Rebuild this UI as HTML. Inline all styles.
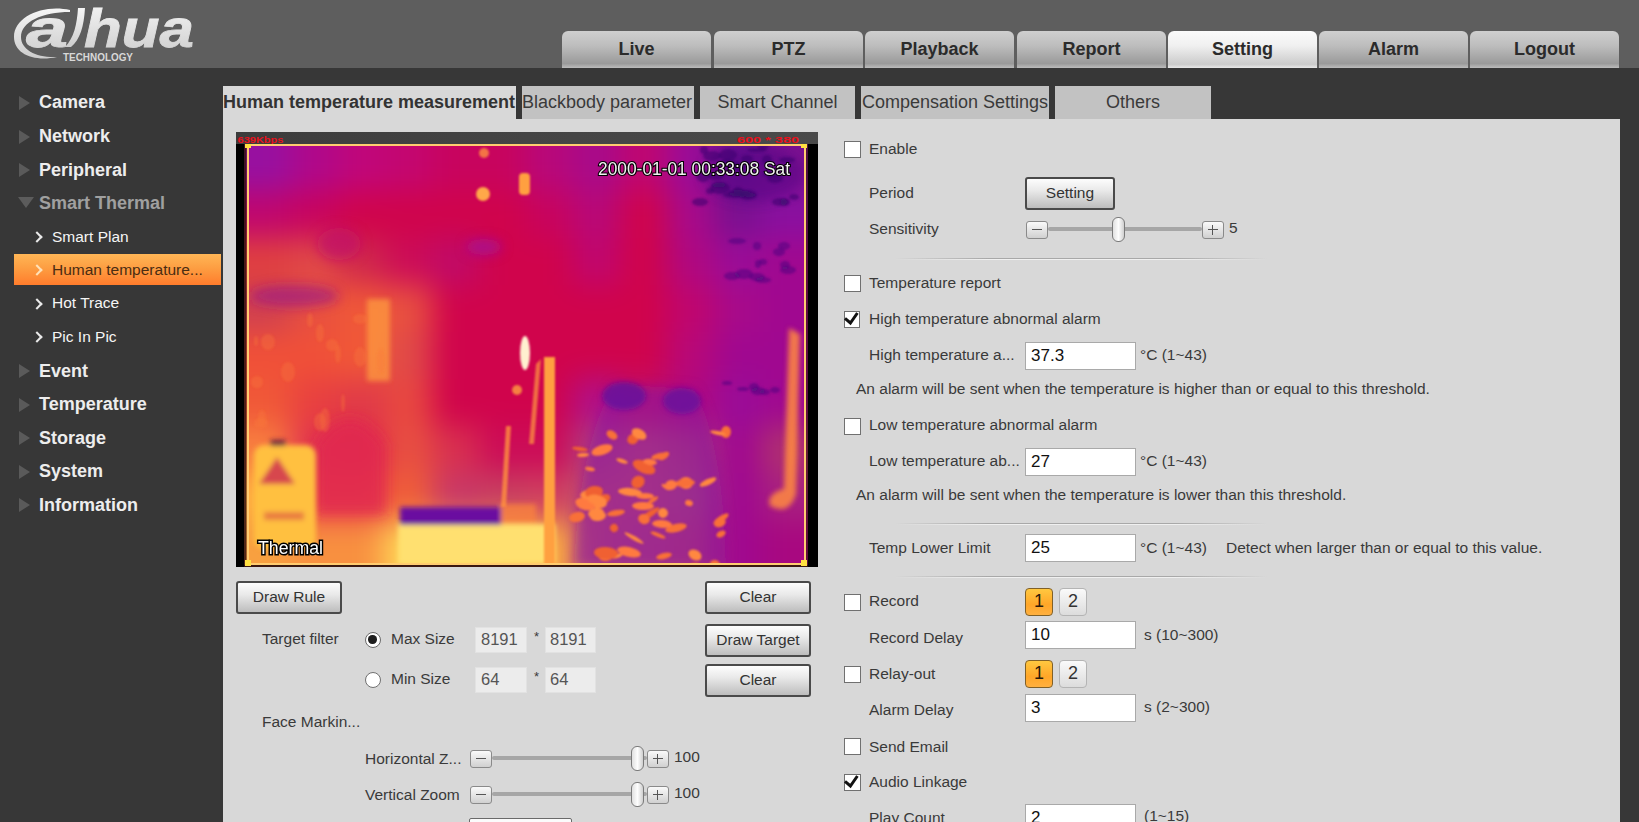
<!DOCTYPE html>
<html><head><meta charset="utf-8">
<style>
*{box-sizing:border-box;margin:0;padding:0}
html,body{width:1639px;height:822px;overflow:hidden;background:#373737;font-family:"Liberation Sans",sans-serif;position:relative}
.a{position:absolute;white-space:nowrap}
#hdr{position:absolute;left:0;top:0;width:1639px;height:68px;background:#5e5e5e}
.nt{position:absolute;top:31px;width:149px;height:37px;border-radius:6px 6px 0 0;background:linear-gradient(#cfcfcf 0%,#bdbdbd 40%,#9a9a9a 88%,#bcbcbc 100%);font-weight:bold;font-size:18px;color:#2b2b2b;text-align:center;line-height:37px}
.nt.on{background:linear-gradient(#fbfbfb 0%,#f0f0f0 40%,#cbcbcb 90%,#e8e8e8 100%)}
#side{position:absolute;left:0;top:68px;width:223px;height:754px;background:#373737}
.m{position:absolute;left:39px;font-size:18px;font-weight:bold;color:#ededed;line-height:20px}
.tri{position:absolute;left:19px;margin-top:1px;width:0;height:0;border-top:7px solid transparent;border-bottom:7px solid transparent;border-left:11px solid #5a5a5a}
.sm{position:absolute;left:52px;font-size:15.5px;color:#f5f5f5;line-height:18px;margin-top:1px}
.chev{position:absolute;left:33px;width:8px;height:8px;border-right:2.4px solid #eaeaea;border-top:2.4px solid #eaeaea;transform:rotate(45deg);margin-top:1px}
.tab{position:absolute;top:86px;height:33px;background:#c2c2c2;font-size:18px;color:#3a3a3a;line-height:33px;text-align:center;white-space:nowrap}
#panel{position:absolute;left:223px;top:119px;width:1397px;height:703px;background:#d8d8d8}
.t{position:absolute;font-size:15.5px;color:#3a3a3a;white-space:nowrap;line-height:18px;margin-top:-1px}
.cb{position:absolute;width:16.5px;height:16.5px;border:1.6px solid #707070;background:#fff}
.inp{position:absolute;width:111px;height:28px;border:1px solid #a9a9a9;background:#fff;font-size:17px;color:#111;padding-left:5px;line-height:25px}
.btn{position:absolute;border:2px solid #4a4a4a;border-radius:3px;background:linear-gradient(#fdfdfd,#e9e9e9 40%,#bdbdbd);font-size:15.5px;color:#333;text-align:center}
.sep{position:absolute;height:1px;background:linear-gradient(90deg,rgba(160,160,160,0),#a8a8a8 25%,#a8a8a8 75%,rgba(160,160,160,0))}.sep:after{content:"";position:absolute;left:0;top:1px;width:100%;height:1px;background:linear-gradient(90deg,rgba(250,250,250,0),#f0f0f0 25%,#f0f0f0 75%,rgba(250,250,250,0))}
</style></head><body>
<div id="hdr">
<svg class="a" style="left:0;top:0" width="220" height="68" viewBox="0 0 220 68">
<defs><linearGradient id="lg" x1="0" y1="0" x2="0" y2="1"><stop offset="0" stop-color="#f6f6f6"/><stop offset="1" stop-color="#cdcdcd"/></linearGradient></defs>
<path d="M70 10 C44 4 14 16 14 37 C14 54 34 62 57 57 C37 58 21 50 21 37 C21 22 42 12 70 12 Z" fill="url(#lg)"/>
<text x="26" y="47" font-family="Liberation Sans" font-weight="bold" font-style="italic" font-size="53" fill="url(#lg)" stroke="url(#lg)" stroke-width="0.8" textLength="42" lengthAdjust="spacingAndGlyphs">a</text>
<path d="M78 8 L85 8 C84 26 80 40 71 47 L65 47 C74 38 77 24 78 8 Z" fill="url(#lg)"/>
<text x="84" y="47" font-family="Liberation Sans" font-weight="bold" font-style="italic" font-size="53" fill="url(#lg)" stroke="url(#lg)" stroke-width="0.8" textLength="110" lengthAdjust="spacingAndGlyphs">hua</text>
<text x="63" y="61" font-family="Liberation Sans" font-weight="bold" font-size="10.5" fill="#d8d8d8" textLength="70" lengthAdjust="spacingAndGlyphs">TECHNOLOGY</text>
</svg>
<div class="nt" style="left:562px">Live</div>
<div class="nt" style="left:714px">PTZ</div>
<div class="nt" style="left:865px">Playback</div>
<div class="nt" style="left:1017px">Report</div>
<div class="nt on" style="left:1168px">Setting</div>
<div class="nt" style="left:1319px">Alarm</div>
<div class="nt" style="left:1470px">Logout</div>
</div>
<div id="side">
<div class="tri" style="top:26.5px"></div><div class="m" style="top:23.9px">Camera</div>
<div class="tri" style="top:60.5px"></div><div class="m" style="top:58px">Network</div>
<div class="tri" style="top:94px"></div><div class="m" style="top:91.7px">Peripheral</div>
<div class="tri2" style="position:absolute;left:18px;top:129px;width:0;height:0;border-left:8px solid transparent;border-right:8px solid transparent;border-top:11px solid #5c5c5c"></div><div class="m" style="top:124.5px;color:#a0a0a0">Smart Thermal</div>
<div class="chev" style="top:164px"></div><div class="sm" style="top:159px">Smart Plan</div>
<div style="position:absolute;left:14px;top:186px;width:207px;height:31px;background:linear-gradient(#ffb656,#fd9e42 45%,#ff7c2c)"></div>
<div class="chev" style="top:197px;border-color:#ffe2b8"></div><div class="sm" style="top:192px;color:#4a2c12">Human temperature...</div>
<div class="chev" style="top:230.5px"></div><div class="sm" style="top:225.4px">Hot Trace</div>
<div class="chev" style="top:264.3px"></div><div class="sm" style="top:259.2px">Pic In Pic</div>
<div class="tri" style="top:295px"></div><div class="m" style="top:292.5px">Event</div>
<div class="tri" style="top:328.5px"></div><div class="m" style="top:326.2px">Temperature</div>
<div class="tri" style="top:362px"></div><div class="m" style="top:359.8px">Storage</div>
<div class="tri" style="top:395.5px"></div><div class="m" style="top:393.4px">System</div>
<div class="tri" style="top:429px"></div><div class="m" style="top:427px">Information</div>
</div>
<div class="tab" style="left:223px;width:293px;background:#d8d8d8;font-weight:bold;color:#333;text-align:left">Human temperature measurement</div>
<div class="tab" style="left:522px;width:172px;text-align:left">Blackbody parameter</div>
<div class="tab" style="left:700px;width:155px">Smart Channel</div>
<div class="tab" style="left:861px;width:188px;text-align:left;padding-left:1px">Compensation Settings</div>
<div class="tab" style="left:1055px;width:156px">Others</div>
<div id="panel"></div>
<div class="a" style="left:236px;top:132px;width:582px;height:435px;background:#000"></div>
<div class="a" style="left:236px;top:132px;width:582px;height:12px;background:linear-gradient(90deg,#3c3c3c,#444 50%,#4a4a4a)"></div>
<svg class="a" style="left:236px;top:132px" width="582" height="12"><text x="1.5" y="10.5" font-family="Liberation Sans" font-weight="bold" font-size="9" fill="#e8101c" textLength="46" lengthAdjust="spacingAndGlyphs">639Kbps</text><text x="501" y="10.5" font-family="Liberation Sans" font-weight="bold" font-size="9" fill="#e8101c" textLength="62" lengthAdjust="spacingAndGlyphs">600 * 380</text></svg>

<div class="a" style="left:244px;top:144px;width:564px;height:423px;overflow:hidden"><div style="position:absolute;left:-47px;top:-47px;width:658px;height:517px;filter:blur(15px)"><div style="position:absolute;left:0px;top:0px;width:48px;height:48px;background:#9810a0"></div><div style="position:absolute;left:47px;top:0px;width:48px;height:48px;background:#9810a0"></div><div style="position:absolute;left:94px;top:0px;width:48px;height:48px;background:#b0088a"></div><div style="position:absolute;left:141px;top:0px;width:48px;height:48px;background:#c0067a"></div><div style="position:absolute;left:188px;top:0px;width:48px;height:48px;background:#c40670"></div><div style="position:absolute;left:235px;top:0px;width:48px;height:48px;background:#c8045e"></div><div style="position:absolute;left:282px;top:0px;width:48px;height:48px;background:#c8045e"></div><div style="position:absolute;left:329px;top:0px;width:48px;height:48px;background:#b8087a"></div><div style="position:absolute;left:376px;top:0px;width:48px;height:48px;background:#a80a8a"></div><div style="position:absolute;left:423px;top:0px;width:48px;height:48px;background:#c00670"></div><div style="position:absolute;left:470px;top:0px;width:48px;height:48px;background:#9a0c98"></div><div style="position:absolute;left:517px;top:0px;width:48px;height:48px;background:#6a1090"></div><div style="position:absolute;left:564px;top:0px;width:48px;height:48px;background:#7a1090"></div><div style="position:absolute;left:611px;top:0px;width:48px;height:48px;background:#7a1090"></div><div style="position:absolute;left:0px;top:47px;width:48px;height:48px;background:#9810a0"></div><div style="position:absolute;left:47px;top:47px;width:48px;height:48px;background:#9810a0"></div><div style="position:absolute;left:94px;top:47px;width:48px;height:48px;background:#b0088a"></div><div style="position:absolute;left:141px;top:47px;width:48px;height:48px;background:#c0067a"></div><div style="position:absolute;left:188px;top:47px;width:48px;height:48px;background:#c40670"></div><div style="position:absolute;left:235px;top:47px;width:48px;height:48px;background:#c8045e"></div><div style="position:absolute;left:282px;top:47px;width:48px;height:48px;background:#c8045e"></div><div style="position:absolute;left:329px;top:47px;width:48px;height:48px;background:#b8087a"></div><div style="position:absolute;left:376px;top:47px;width:48px;height:48px;background:#a80a8a"></div><div style="position:absolute;left:423px;top:47px;width:48px;height:48px;background:#c00670"></div><div style="position:absolute;left:470px;top:47px;width:48px;height:48px;background:#9a0c98"></div><div style="position:absolute;left:517px;top:47px;width:48px;height:48px;background:#6a1090"></div><div style="position:absolute;left:564px;top:47px;width:48px;height:48px;background:#7a1090"></div><div style="position:absolute;left:611px;top:47px;width:48px;height:48px;background:#7a1090"></div><div style="position:absolute;left:0px;top:94px;width:48px;height:48px;background:#c0066e"></div><div style="position:absolute;left:47px;top:94px;width:48px;height:48px;background:#c0066e"></div><div style="position:absolute;left:94px;top:94px;width:48px;height:48px;background:#c8045e"></div><div style="position:absolute;left:141px;top:94px;width:48px;height:48px;background:#d0044c"></div><div style="position:absolute;left:188px;top:94px;width:48px;height:48px;background:#d0044c"></div><div style="position:absolute;left:235px;top:94px;width:48px;height:48px;background:#d0044c"></div><div style="position:absolute;left:282px;top:94px;width:48px;height:48px;background:#d0044c"></div><div style="position:absolute;left:329px;top:94px;width:48px;height:48px;background:#c8045e"></div><div style="position:absolute;left:376px;top:94px;width:48px;height:48px;background:#b80878"></div><div style="position:absolute;left:423px;top:94px;width:48px;height:48px;background:#d0044c"></div><div style="position:absolute;left:470px;top:94px;width:48px;height:48px;background:#a80a8a"></div><div style="position:absolute;left:517px;top:94px;width:48px;height:48px;background:#7a1090"></div><div style="position:absolute;left:564px;top:94px;width:48px;height:48px;background:#8a10a0"></div><div style="position:absolute;left:611px;top:94px;width:48px;height:48px;background:#8a10a0"></div><div style="position:absolute;left:0px;top:141px;width:48px;height:48px;background:#e04040"></div><div style="position:absolute;left:47px;top:141px;width:48px;height:48px;background:#e04040"></div><div style="position:absolute;left:94px;top:141px;width:48px;height:48px;background:#e04848"></div><div style="position:absolute;left:141px;top:141px;width:48px;height:48px;background:#d0284c"></div><div style="position:absolute;left:188px;top:141px;width:48px;height:48px;background:#cc0c58"></div><div style="position:absolute;left:235px;top:141px;width:48px;height:48px;background:#c00a68"></div><div style="position:absolute;left:282px;top:141px;width:48px;height:48px;background:#d0044c"></div><div style="position:absolute;left:329px;top:141px;width:48px;height:48px;background:#d0044c"></div><div style="position:absolute;left:376px;top:141px;width:48px;height:48px;background:#c0066e"></div><div style="position:absolute;left:423px;top:141px;width:48px;height:48px;background:#d0044c"></div><div style="position:absolute;left:470px;top:141px;width:48px;height:48px;background:#b00880"></div><div style="position:absolute;left:517px;top:141px;width:48px;height:48px;background:#9a0c98"></div><div style="position:absolute;left:564px;top:141px;width:48px;height:48px;background:#a00890"></div><div style="position:absolute;left:611px;top:141px;width:48px;height:48px;background:#a00890"></div><div style="position:absolute;left:0px;top:188px;width:48px;height:48px;background:#d04050"></div><div style="position:absolute;left:47px;top:188px;width:48px;height:48px;background:#d04050"></div><div style="position:absolute;left:94px;top:188px;width:48px;height:48px;background:#e85040"></div><div style="position:absolute;left:141px;top:188px;width:48px;height:48px;background:#f05838"></div><div style="position:absolute;left:188px;top:188px;width:48px;height:48px;background:#e85040"></div><div style="position:absolute;left:235px;top:188px;width:48px;height:48px;background:#d0044c"></div><div style="position:absolute;left:282px;top:188px;width:48px;height:48px;background:#d0044c"></div><div style="position:absolute;left:329px;top:188px;width:48px;height:48px;background:#d0044c"></div><div style="position:absolute;left:376px;top:188px;width:48px;height:48px;background:#d0044c"></div><div style="position:absolute;left:423px;top:188px;width:48px;height:48px;background:#d0044c"></div><div style="position:absolute;left:470px;top:188px;width:48px;height:48px;background:#c0066e"></div><div style="position:absolute;left:517px;top:188px;width:48px;height:48px;background:#a80a8a"></div><div style="position:absolute;left:564px;top:188px;width:48px;height:48px;background:#a00890"></div><div style="position:absolute;left:611px;top:188px;width:48px;height:48px;background:#a00890"></div><div style="position:absolute;left:0px;top:235px;width:48px;height:48px;background:#f05038"></div><div style="position:absolute;left:47px;top:235px;width:48px;height:48px;background:#f05038"></div><div style="position:absolute;left:94px;top:235px;width:48px;height:48px;background:#f05038"></div><div style="position:absolute;left:141px;top:235px;width:48px;height:48px;background:#f05838"></div><div style="position:absolute;left:188px;top:235px;width:48px;height:48px;background:#e04a48"></div><div style="position:absolute;left:235px;top:235px;width:48px;height:48px;background:#d0044c"></div><div style="position:absolute;left:282px;top:235px;width:48px;height:48px;background:#d0044c"></div><div style="position:absolute;left:329px;top:235px;width:48px;height:48px;background:#d0044c"></div><div style="position:absolute;left:376px;top:235px;width:48px;height:48px;background:#d0044c"></div><div style="position:absolute;left:423px;top:235px;width:48px;height:48px;background:#d0044c"></div><div style="position:absolute;left:470px;top:235px;width:48px;height:48px;background:#b80878"></div><div style="position:absolute;left:517px;top:235px;width:48px;height:48px;background:#a00890"></div><div style="position:absolute;left:564px;top:235px;width:48px;height:48px;background:#a00890"></div><div style="position:absolute;left:611px;top:235px;width:48px;height:48px;background:#a00890"></div><div style="position:absolute;left:0px;top:282px;width:48px;height:48px;background:#f05838"></div><div style="position:absolute;left:47px;top:282px;width:48px;height:48px;background:#f05838"></div><div style="position:absolute;left:94px;top:282px;width:48px;height:48px;background:#e84040"></div><div style="position:absolute;left:141px;top:282px;width:48px;height:48px;background:#e03a48"></div><div style="position:absolute;left:188px;top:282px;width:48px;height:48px;background:#e84840"></div><div style="position:absolute;left:235px;top:282px;width:48px;height:48px;background:#d0044c"></div><div style="position:absolute;left:282px;top:282px;width:48px;height:48px;background:#d0044c"></div><div style="position:absolute;left:329px;top:282px;width:48px;height:48px;background:#d0044c"></div><div style="position:absolute;left:376px;top:282px;width:48px;height:48px;background:#b0108a"></div><div style="position:absolute;left:423px;top:282px;width:48px;height:48px;background:#c0106a"></div><div style="position:absolute;left:470px;top:282px;width:48px;height:48px;background:#b00880"></div><div style="position:absolute;left:517px;top:282px;width:48px;height:48px;background:#9a0c98"></div><div style="position:absolute;left:564px;top:282px;width:48px;height:48px;background:#a00890"></div><div style="position:absolute;left:611px;top:282px;width:48px;height:48px;background:#a00890"></div><div style="position:absolute;left:0px;top:329px;width:48px;height:48px;background:#f88040"></div><div style="position:absolute;left:47px;top:329px;width:48px;height:48px;background:#f88040"></div><div style="position:absolute;left:94px;top:329px;width:48px;height:48px;background:#e03050"></div><div style="position:absolute;left:141px;top:329px;width:48px;height:48px;background:#e02850"></div><div style="position:absolute;left:188px;top:329px;width:48px;height:48px;background:#e85040"></div><div style="position:absolute;left:235px;top:329px;width:48px;height:48px;background:#d83050"></div><div style="position:absolute;left:282px;top:329px;width:48px;height:48px;background:#cc0c58"></div><div style="position:absolute;left:329px;top:329px;width:48px;height:48px;background:#cc0c58"></div><div style="position:absolute;left:376px;top:329px;width:48px;height:48px;background:#b04080"></div><div style="position:absolute;left:423px;top:329px;width:48px;height:48px;background:#c05070"></div><div style="position:absolute;left:470px;top:329px;width:48px;height:48px;background:#b04078"></div><div style="position:absolute;left:517px;top:329px;width:48px;height:48px;background:#a00890"></div><div style="position:absolute;left:564px;top:329px;width:48px;height:48px;background:#b03070"></div><div style="position:absolute;left:611px;top:329px;width:48px;height:48px;background:#b03070"></div><div style="position:absolute;left:0px;top:376px;width:48px;height:48px;background:#ffb040"></div><div style="position:absolute;left:47px;top:376px;width:48px;height:48px;background:#ffb040"></div><div style="position:absolute;left:94px;top:376px;width:48px;height:48px;background:#e84048"></div><div style="position:absolute;left:141px;top:376px;width:48px;height:48px;background:#e84048"></div><div style="position:absolute;left:188px;top:376px;width:48px;height:48px;background:#f06038"></div><div style="position:absolute;left:235px;top:376px;width:48px;height:48px;background:#c83868"></div><div style="position:absolute;left:282px;top:376px;width:48px;height:48px;background:#c84060"></div><div style="position:absolute;left:329px;top:376px;width:48px;height:48px;background:#d04060"></div><div style="position:absolute;left:376px;top:376px;width:48px;height:48px;background:#c05070"></div><div style="position:absolute;left:423px;top:376px;width:48px;height:48px;background:#c05070"></div><div style="position:absolute;left:470px;top:376px;width:48px;height:48px;background:#b05078"></div><div style="position:absolute;left:517px;top:376px;width:48px;height:48px;background:#a00890"></div><div style="position:absolute;left:564px;top:376px;width:48px;height:48px;background:#a82080"></div><div style="position:absolute;left:611px;top:376px;width:48px;height:48px;background:#a82080"></div><div style="position:absolute;left:0px;top:423px;width:48px;height:48px;background:#f8a040"></div><div style="position:absolute;left:47px;top:423px;width:48px;height:48px;background:#f8a040"></div><div style="position:absolute;left:94px;top:423px;width:48px;height:48px;background:#f89040"></div><div style="position:absolute;left:141px;top:423px;width:48px;height:48px;background:#f89040"></div><div style="position:absolute;left:188px;top:423px;width:48px;height:48px;background:#ffd858"></div><div style="position:absolute;left:235px;top:423px;width:48px;height:48px;background:#ffd858"></div><div style="position:absolute;left:282px;top:423px;width:48px;height:48px;background:#ffc850"></div><div style="position:absolute;left:329px;top:423px;width:48px;height:48px;background:#ffb040"></div><div style="position:absolute;left:376px;top:423px;width:48px;height:48px;background:#c05070"></div><div style="position:absolute;left:423px;top:423px;width:48px;height:48px;background:#b84878"></div><div style="position:absolute;left:470px;top:423px;width:48px;height:48px;background:#b84070"></div><div style="position:absolute;left:517px;top:423px;width:48px;height:48px;background:#a00890"></div><div style="position:absolute;left:564px;top:423px;width:48px;height:48px;background:#a80880"></div><div style="position:absolute;left:611px;top:423px;width:48px;height:48px;background:#a80880"></div><div style="position:absolute;left:0px;top:470px;width:48px;height:48px;background:#f8a040"></div><div style="position:absolute;left:47px;top:470px;width:48px;height:48px;background:#f8a040"></div><div style="position:absolute;left:94px;top:470px;width:48px;height:48px;background:#f89040"></div><div style="position:absolute;left:141px;top:470px;width:48px;height:48px;background:#f89040"></div><div style="position:absolute;left:188px;top:470px;width:48px;height:48px;background:#ffd858"></div><div style="position:absolute;left:235px;top:470px;width:48px;height:48px;background:#ffd858"></div><div style="position:absolute;left:282px;top:470px;width:48px;height:48px;background:#ffc850"></div><div style="position:absolute;left:329px;top:470px;width:48px;height:48px;background:#ffb040"></div><div style="position:absolute;left:376px;top:470px;width:48px;height:48px;background:#c05070"></div><div style="position:absolute;left:423px;top:470px;width:48px;height:48px;background:#b84878"></div><div style="position:absolute;left:470px;top:470px;width:48px;height:48px;background:#b84070"></div><div style="position:absolute;left:517px;top:470px;width:48px;height:48px;background:#a00890"></div><div style="position:absolute;left:564px;top:470px;width:48px;height:48px;background:#a80880"></div><div style="position:absolute;left:611px;top:470px;width:48px;height:48px;background:#a80880"></div></div></div><svg class="a" style="left:244px;top:144px" width="564" height="423" viewBox="0 0 564 423">
<defs>
<filter id="bg" x="-60" y="-60" width="684" height="543" filterUnits="userSpaceOnUse"><feGaussianBlur stdDeviation="15"/></filter>
<filter id="b6" x="-50%" y="-50%" width="200%" height="200%"><feGaussianBlur stdDeviation="6"/></filter>
<filter id="b3" x="-50%" y="-50%" width="200%" height="200%"><feGaussianBlur stdDeviation="2.5"/></filter>
<filter id="b15" x="-50%" y="-50%" width="200%" height="200%"><feGaussianBlur stdDeviation="1.2"/></filter>
</defs>

<g filter="url(#b6)">
<path d="M72 370 L72 300 Q105 250 141 300 L141 370 Z" fill="#e02850" opacity="0.75"/>
<path d="M330 423 Q335 300 370 240 L450 245 Q480 300 482 423 Z" fill="#8a10a0" opacity="0.55"/>
<ellipse cx="50" cy="152" rx="45" ry="11" fill="#a01880" opacity="0.7"/>
<ellipse cx="95" cy="100" rx="22" ry="16" fill="#c0106a" opacity="0.7"/>
<ellipse cx="240" cy="103" rx="18" ry="8" fill="#a010a0" opacity="0.7"/>
<ellipse cx="510" cy="30" rx="50" ry="28" fill="#4a0a80" opacity="0.4"/>
</g>
<g filter="url(#b3)">
<rect x="10" y="301" width="62" height="104" rx="10" fill="#ffc040"/>
<path d="M15 340 L33 313 L51 340 Z" fill="#d03050" opacity="0.85"/>
<rect x="20" y="368" width="40" height="8" fill="#e06040" opacity="0.7"/>
<rect x="26" y="296" width="16" height="6" rx="3" fill="#6a2040"/>
<rect x="154" y="380" width="157" height="40" fill="#ffe070"/>
<rect x="156" y="363" width="101" height="18" fill="#6a10a0"/>
<rect x="257" y="360" width="35" height="20" fill="#f88040" opacity="0.8"/>
<rect x="123" y="155" width="23" height="82" fill="#ffa040" opacity="0.7"/>
<ellipse cx="380" cy="252" rx="22" ry="14" fill="#5a10a0" opacity="0.7"/>
<ellipse cx="438" cy="257" rx="19" ry="13" fill="#5a10a0" opacity="0.65"/>
<path d="M545 184 L556 190 L552 350 Q545 372 526 362 Q522 350 540 345 Z" fill="#ff8a40" opacity="0.85"/>
</g>
<g filter="url(#b15)"><ellipse cx="399" cy="362" rx="11" ry="4" transform="rotate(1 399 362)" fill="#ff7a40"/><ellipse cx="358" cy="356" rx="9" ry="5" transform="rotate(-28 358 356)" fill="#f06030"/><ellipse cx="352" cy="359" rx="11" ry="5" transform="rotate(7 352 359)" fill="#ff8840"/><ellipse cx="477" cy="375" rx="9" ry="3" transform="rotate(-34 477 375)" fill="#f87038"/><ellipse cx="339" cy="311" rx="6" ry="2" transform="rotate(-3 339 311)" fill="#ff8840"/><ellipse cx="420" cy="312" rx="6" ry="3" transform="rotate(-35 420 312)" fill="#f87038"/><ellipse cx="400" cy="323" rx="12" ry="6" transform="rotate(24 400 323)" fill="#f06030"/><ellipse cx="378" cy="317" rx="6" ry="2" transform="rotate(19 378 317)" fill="#ff8840"/><ellipse cx="346" cy="325" rx="5" ry="2" transform="rotate(13 346 325)" fill="#ff7a40"/><ellipse cx="362" cy="411" rx="8" ry="6" transform="rotate(-7 362 411)" fill="#f87038"/><ellipse cx="416" cy="312" rx="9" ry="3" transform="rotate(-13 416 312)" fill="#f87038"/><ellipse cx="477" cy="390" rx="5" ry="3" transform="rotate(-28 477 390)" fill="#f87038"/><ellipse cx="401" cy="352" rx="9" ry="3" transform="rotate(1 401 352)" fill="#ff7a40"/><ellipse cx="394" cy="338" rx="7" ry="6" transform="rotate(-35 394 338)" fill="#f06030"/><ellipse cx="482" cy="288" rx="5" ry="6" transform="rotate(7 482 288)" fill="#f87038"/><ellipse cx="336" cy="305" rx="8" ry="2" transform="rotate(8 336 305)" fill="#f06030"/><ellipse cx="389" cy="295" rx="6" ry="5" transform="rotate(-34 389 295)" fill="#f06030"/><ellipse cx="386" cy="348" rx="12" ry="4" transform="rotate(5 386 348)" fill="#ff8840"/><ellipse cx="358" cy="306" rx="11" ry="5" transform="rotate(-18 358 306)" fill="#ff7a40"/><ellipse cx="354" cy="372" rx="8" ry="5" transform="rotate(-8 354 372)" fill="#ff8840"/><ellipse cx="422" cy="343" rx="5" ry="2" transform="rotate(32 422 343)" fill="#ff7a40"/><ellipse cx="442" cy="339" rx="7" ry="6" transform="rotate(-1 442 339)" fill="#ff7a40"/><ellipse cx="471" cy="420" rx="5" ry="4" transform="rotate(11 471 420)" fill="#f87038"/><ellipse cx="373" cy="412" rx="6" ry="2" transform="rotate(-16 373 412)" fill="#ff8840"/><ellipse cx="368" cy="291" rx="6" ry="4" transform="rotate(33 368 291)" fill="#f87038"/><ellipse cx="385" cy="408" rx="12" ry="5" transform="rotate(13 385 408)" fill="#ff7a40"/><ellipse cx="420" cy="412" rx="8" ry="3" transform="rotate(-13 420 412)" fill="#f87038"/><ellipse cx="333" cy="373" rx="8" ry="5" transform="rotate(-13 333 373)" fill="#f87038"/><ellipse cx="341" cy="360" rx="10" ry="6" transform="rotate(17 341 360)" fill="#ff7a40"/><ellipse cx="451" cy="411" rx="7" ry="5" transform="rotate(28 451 411)" fill="#ff8840"/><ellipse cx="474" cy="289" rx="8" ry="2" transform="rotate(11 474 289)" fill="#ff8840"/><ellipse cx="419" cy="369" rx="5" ry="5" transform="rotate(35 419 369)" fill="#ff8840"/><ellipse cx="441" cy="339" rx="10" ry="4" transform="rotate(-4 441 339)" fill="#f87038"/><ellipse cx="409" cy="356" rx="6" ry="2" transform="rotate(-33 409 356)" fill="#f87038"/><ellipse cx="406" cy="370" rx="11" ry="3" transform="rotate(-34 406 370)" fill="#f06030"/><ellipse cx="352" cy="369" rx="8" ry="5" transform="rotate(-11 352 369)" fill="#ff8840"/><ellipse cx="406" cy="318" rx="7" ry="3" transform="rotate(9 406 318)" fill="#ff7a40"/><ellipse cx="464" cy="338" rx="9" ry="3" transform="rotate(-25 464 338)" fill="#ff8840"/><ellipse cx="383" cy="409" rx="4" ry="2" transform="rotate(34 383 409)" fill="#ff7a40"/><ellipse cx="347" cy="350" rx="11" ry="5" transform="rotate(-8 347 350)" fill="#ff8840"/><ellipse cx="432" cy="384" rx="11" ry="4" transform="rotate(-13 432 384)" fill="#f87038"/><ellipse cx="372" cy="369" rx="9" ry="3" transform="rotate(-10 372 369)" fill="#f87038"/><ellipse cx="427" cy="341" rx="6" ry="5" transform="rotate(-16 427 341)" fill="#ff7a40"/><ellipse cx="451" cy="421" rx="5" ry="2" transform="rotate(2 451 421)" fill="#f06030"/><ellipse cx="476" cy="379" rx="6" ry="4" transform="rotate(-22 476 379)" fill="#f87038"/><ellipse cx="445" cy="359" rx="4" ry="3" transform="rotate(20 445 359)" fill="#ff7a40"/><ellipse cx="390" cy="394" rx="11" ry="2" transform="rotate(30 390 394)" fill="#ff8840"/><ellipse cx="350" cy="348" rx="9" ry="6" transform="rotate(-9 350 348)" fill="#f06030"/><ellipse cx="400" cy="375" rx="6" ry="5" transform="rotate(22 400 375)" fill="#f87038"/><ellipse cx="362" cy="409" rx="12" ry="6" transform="rotate(3 362 409)" fill="#f06030"/><ellipse cx="370" cy="384" rx="4" ry="4" transform="rotate(-32 370 384)" fill="#f06030"/><ellipse cx="414" cy="391" rx="8" ry="2" transform="rotate(22 414 391)" fill="#f87038"/><ellipse cx="395" cy="290" rx="8" ry="5" transform="rotate(29 395 290)" fill="#ff8840"/><ellipse cx="353" cy="356" rx="10" ry="5" transform="rotate(13 353 356)" fill="#ff8840"/><ellipse cx="418" cy="380" rx="10" ry="4" transform="rotate(4 418 380)" fill="#ff7a40"/><ellipse cx="504" cy="51" rx="8" ry="3" fill="#3a0a70" opacity="0.55"/><ellipse cx="490" cy="51" rx="11" ry="3" fill="#3a0a70" opacity="0.55"/><ellipse cx="536" cy="58" rx="8" ry="4" fill="#3a0a70" opacity="0.55"/><ellipse cx="472" cy="32" rx="8" ry="4" fill="#3a0a70" opacity="0.55"/><ellipse cx="456" cy="58" rx="8" ry="4" fill="#3a0a70" opacity="0.55"/><ellipse cx="531" cy="34" rx="8" ry="5" fill="#3a0a70" opacity="0.55"/><ellipse cx="459" cy="32" rx="7" ry="6" fill="#3a0a70" opacity="0.55"/><ellipse cx="543" cy="16" rx="8" ry="3" fill="#3a0a70" opacity="0.55"/><ellipse cx="495" cy="49" rx="11" ry="4" fill="#3a0a70" opacity="0.55"/><ellipse cx="484" cy="11" rx="9" ry="6" fill="#3a0a70" opacity="0.55"/><ellipse cx="466" cy="47" rx="4" ry="3" fill="#3a0a70" opacity="0.55"/><ellipse cx="475" cy="41" rx="7" ry="3" fill="#3a0a70" opacity="0.55"/><ellipse cx="513" cy="6" rx="10" ry="2" fill="#3a0a70" opacity="0.55"/><ellipse cx="503" cy="15" rx="6" ry="4" fill="#3a0a70" opacity="0.55"/><ellipse cx="495" cy="23" rx="7" ry="4" fill="#3a0a70" opacity="0.55"/><ellipse cx="468" cy="12" rx="9" ry="5" fill="#3a0a70" opacity="0.55"/><ellipse cx="504" cy="51" rx="9" ry="5" fill="#3a0a70" opacity="0.55"/><ellipse cx="476" cy="44" rx="10" ry="6" fill="#3a0a70" opacity="0.55"/><ellipse cx="484" cy="19" rx="11" ry="3" fill="#3a0a70" opacity="0.55"/><ellipse cx="550" cy="53" rx="5" ry="3" fill="#3a0a70" opacity="0.55"/><ellipse cx="523" cy="16" rx="5" ry="5" fill="#3a0a70" opacity="0.55"/><ellipse cx="494" cy="47" rx="5" ry="4" fill="#3a0a70" opacity="0.55"/><ellipse cx="519" cy="1" rx="6" ry="5" fill="#3a0a70" opacity="0.55"/><ellipse cx="541" cy="58" rx="5" ry="4" fill="#3a0a70" opacity="0.55"/><ellipse cx="527" cy="30" rx="9" ry="3" fill="#3a0a70" opacity="0.55"/><ellipse cx="460" cy="6" rx="4" ry="4" fill="#3a0a70" opacity="0.55"/><ellipse cx="519" cy="118" rx="4" ry="3" fill="#4a0a80" opacity="0.5"/><ellipse cx="500" cy="130" rx="9" ry="5" fill="#4a0a80" opacity="0.5"/><ellipse cx="493" cy="97" rx="9" ry="3" fill="#4a0a80" opacity="0.5"/><ellipse cx="535" cy="108" rx="6" ry="4" fill="#4a0a80" opacity="0.5"/><ellipse cx="514" cy="120" rx="3" ry="4" fill="#4a0a80" opacity="0.5"/><ellipse cx="540" cy="102" rx="6" ry="4" fill="#4a0a80" opacity="0.5"/><ellipse cx="513" cy="102" rx="4" ry="4" fill="#4a0a80" opacity="0.5"/><ellipse cx="488" cy="132" rx="8" ry="4" fill="#4a0a80" opacity="0.5"/><ellipse cx="541" cy="121" rx="5" ry="4" fill="#4a0a80" opacity="0.5"/><ellipse cx="519" cy="136" rx="8" ry="3" fill="#4a0a80" opacity="0.5"/><ellipse cx="544" cy="126" rx="8" ry="4" fill="#4a0a80" opacity="0.5"/><ellipse cx="513" cy="133" rx="8" ry="4" fill="#4a0a80" opacity="0.5"/><ellipse cx="521" cy="248" rx="5" ry="3" fill="#4a0a80" opacity="0.5"/><ellipse cx="483" cy="239" rx="5" ry="2" fill="#4a0a80" opacity="0.5"/><ellipse cx="499" cy="245" rx="6" ry="2" fill="#4a0a80" opacity="0.5"/><ellipse cx="531" cy="246" rx="5" ry="3" fill="#4a0a80" opacity="0.5"/><ellipse cx="510" cy="243" rx="5" ry="4" fill="#4a0a80" opacity="0.5"/><ellipse cx="514" cy="247" rx="7" ry="4" fill="#4a0a80" opacity="0.5"/><ellipse cx="13" cy="238" rx="6" ry="6" fill="#f87838" opacity="0.35"/><ellipse cx="66" cy="176" rx="3" ry="7" fill="#f87838" opacity="0.35"/><ellipse cx="24" cy="198" rx="7" ry="8" fill="#f87838" opacity="0.35"/><ellipse cx="81" cy="276" rx="5" ry="12" fill="#f87838" opacity="0.35"/><ellipse cx="99" cy="259" rx="2" ry="9" fill="#f87838" opacity="0.35"/><ellipse cx="116" cy="175" rx="7" ry="5" fill="#f87838" opacity="0.35"/><ellipse cx="76" cy="189" rx="4" ry="9" fill="#f87838" opacity="0.35"/><ellipse cx="18" cy="274" rx="4" ry="8" fill="#f87838" opacity="0.35"/><ellipse cx="94" cy="210" rx="3" ry="9" fill="#f87838" opacity="0.35"/><ellipse cx="88" cy="201" rx="6" ry="6" fill="#f87838" opacity="0.35"/><ellipse cx="12" cy="197" rx="2" ry="5" fill="#f87838" opacity="0.35"/><ellipse cx="116" cy="213" rx="6" ry="10" fill="#f87838" opacity="0.35"/><ellipse cx="17" cy="279" rx="7" ry="5" fill="#f87838" opacity="0.35"/><ellipse cx="137" cy="217" rx="4" ry="12" fill="#f87838" opacity="0.35"/><ellipse cx="44" cy="228" rx="7" ry="10" fill="#f87838" opacity="0.35"/><ellipse cx="76" cy="278" rx="6" ry="9" fill="#f87838" opacity="0.35"/>
<rect x="300" y="213" width="11" height="210" fill="#ffa040"/>
<path d="M262 282 L267 282 L262 363 L257 363 Z" fill="#ff9040" opacity="0.8"/>
<path d="M292 220 L297 215 L290 300 L285 300 Z" fill="#ff9a40" opacity="0.7"/>
<ellipse cx="281" cy="209" rx="5" ry="17" fill="#fff0d0"/>
<rect x="275" y="29" width="11" height="22" rx="4" fill="#ffa040"/>
<ellipse cx="239" cy="50" rx="7" ry="7" fill="#ffa848"/>
<ellipse cx="240" cy="9" rx="5" ry="5" fill="#ff9040" opacity="0.8"/>
<ellipse cx="273" cy="246" rx="5" ry="5" fill="#ffa040" opacity="0.8"/>
</g>
<text x="354" y="31" font-family="Liberation Sans" font-size="18" fill="#f2f2f2" stroke="#000" stroke-width="2.2" paint-order="stroke" textLength="192" lengthAdjust="spacingAndGlyphs">2000-01-01 00:33:08 Sat</text>
<text x="14" y="410" font-family="Liberation Sans" font-size="18" fill="#fff" stroke="#000" stroke-width="3" paint-order="stroke" textLength="65" lengthAdjust="spacingAndGlyphs">Thermal</text>
<rect x="0" y="421" width="564" height="2" fill="#3a1810"/><rect x="0" y="0" width="2.5" height="423" fill="#301010" opacity="0.85"/><rect x="562" y="0" width="2" height="423" fill="#301010" opacity="0.6"/>
<rect x="4" y="1" width="557" height="419" fill="none" stroke="#ffcc70" stroke-width="2"/>
<rect x="1" y="-2" width="6" height="6" fill="#ffe040"/>
<rect x="557" y="-2" width="6" height="6" fill="#ffe040"/>
<rect x="1" y="416" width="6" height="6" fill="#ffe040"/>
<rect x="557" y="416" width="6" height="6" fill="#ffe040"/>
</svg>
<div class="a" style="left:236px;top:144px;width:8px;height:423px;background:#000"></div>
<div class="a" style="left:808px;top:144px;width:10px;height:423px;background:#000"></div>
<div class="btn" style="left:236px;top:581px;width:106px;height:33px;line-height:27px">Draw Rule</div>
<div class="btn" style="left:705px;top:581px;width:106px;height:33px;line-height:27px">Clear</div>
<div class="btn" style="left:705px;top:624px;width:106px;height:33px;line-height:27px">Draw Target</div>
<div class="btn" style="left:705px;top:664px;width:106px;height:33px;line-height:27px">Clear</div>
<div class="t" style="left:262px;top:631px">Target filter</div>
<div class="a" style="left:365px;top:632px;width:16px;height:16px;border-radius:50%;border:1.6px solid #6a6a6a;background:#fff"><div style="position:absolute;left:2.2px;top:2.2px;width:8.4px;height:8.4px;border-radius:50%;background:#1e1e1e"></div></div>
<div class="t" style="left:391px;top:631px">Max Size</div>
<div class="a" style="left:365px;top:672px;width:16px;height:16px;border-radius:50%;border:1.6px solid #707070;background:#fff"></div>
<div class="t" style="left:391px;top:671px">Min Size</div>
<div class="a" style="left:475px;top:627px;width:52px;height:26px;background:#ececec;border:1px solid #e2e2e2"></div>
<div class="t" style="left:481px;top:631px;font-size:16.5px;color:#555">8191</div>
<div class="t" style="left:534px;top:629px;font-size:13px">*</div>
<div class="a" style="left:545px;top:627px;width:51px;height:26px;background:#ececec;border:1px solid #e2e2e2"></div>
<div class="t" style="left:550px;top:631px;font-size:16.5px;color:#555">8191</div>
<div class="a" style="left:475px;top:667px;width:52px;height:26px;background:#ececec;border:1px solid #e2e2e2"></div>
<div class="t" style="left:481px;top:671px;font-size:16.5px;color:#555">64</div>
<div class="t" style="left:534px;top:669px;font-size:13px">*</div>
<div class="a" style="left:545px;top:667px;width:51px;height:26px;background:#ececec;border:1px solid #e2e2e2"></div>
<div class="t" style="left:550px;top:671px;font-size:16.5px;color:#555">64</div>
<div class="t" style="left:262px;top:714px">Face Markin...</div>
<div class="t" style="left:365px;top:751px">Horizontal Z...</div>
<div class="t" style="left:365px;top:787px">Vertical Zoom</div>
<div class="a" style="left:469px;top:818px;width:103px;height:10px;border:1.5px solid #6a6a6a;border-radius:2px;background:#fbfbfb"></div>

<div class="cb" style="left:844px;top:141px"></div>
<div class="t" style="left:869px;top:140.5px;">Enable</div>
<div class="t" style="left:869px;top:185.3px;">Period</div>
<div class="btn" style="left:1025px;top:177px;width:90px;height:33px;line-height:27px">Setting</div>
<div class="t" style="left:869px;top:221px;">Sensitivity</div>
<div class="a" style="left:1026px;top:221px;width:22px;height:18px;border:1px solid #8a8a8a;border-radius:3px;background:linear-gradient(#fafafa,#d0d0d0)"><div style="position:absolute;left:5px;top:7px;width:10px;height:1.2px;background:#555"></div></div><div class="a" style="left:1048px;top:227px;width:154px;height:3.5px;background:#a6a6a6;border-radius:2px"></div><div class="a" style="left:1112px;top:217px;width:13px;height:25px;border:1px solid #7a7a7a;border-radius:6px;background:linear-gradient(90deg,#e0e0e0,#fdfdfd 50%,#cfcfcf)"></div><div class="a" style="left:1202px;top:221px;width:22px;height:18px;border:1px solid #8a8a8a;border-radius:3px;background:linear-gradient(#fafafa,#d0d0d0)"><div style="position:absolute;left:5px;top:7px;width:10px;height:1.2px;background:#555"></div><div style="position:absolute;left:9px;top:3px;width:1.2px;height:10px;background:#555"></div></div><div class="t" style="left:1229px;top:220px;font-size:15.5px">5</div>
<div class="sep" style="left:895px;top:258px;width:372px"></div>
<div class="cb" style="left:844px;top:275px"></div>
<div class="t" style="left:869px;top:274.5px;">Temperature report</div>
<div class="cb" style="left:843.5px;top:311px"><svg style="position:absolute;left:-1.6px;top:-1.6px" width="17" height="17" viewBox="0 0 17 17"><path d="M2 8.4 L7.4 13 L14.4 3" fill="none" stroke="#111" stroke-width="3"/></svg></div>
<div class="t" style="left:869px;top:311px;">High temperature abnormal alarm</div>
<div class="t" style="left:869px;top:347px;">High temperature a...</div>
<div class="inp" style="left:1025px;top:342px">37.3</div>
<div class="t" style="left:1140px;top:347px;">°C (1~43)</div>
<div class="t" style="left:856px;top:381px;">An alarm will be sent when the temperature is higher than or equal to this threshold.</div>
<div class="cb" style="left:844px;top:418px"></div>
<div class="t" style="left:869px;top:417px;">Low temperature abnormal alarm</div>
<div class="t" style="left:869px;top:453px;">Low temperature ab...</div>
<div class="inp" style="left:1025px;top:448px">27</div>
<div class="t" style="left:1140px;top:453px;">°C (1~43)</div>
<div class="t" style="left:856px;top:487px;">An alarm will be sent when the temperature is lower than this threshold.</div>
<div class="sep" style="left:895px;top:523px;width:372px"></div>
<div class="t" style="left:869px;top:539.6px;">Temp Lower Limit</div>
<div class="inp" style="left:1025px;top:534px">25</div>
<div class="t" style="left:1140px;top:539.6px;">°C (1~43)</div>
<div class="t" style="left:1226px;top:539.6px;">Detect when larger than or equal to this value.</div>
<div class="sep" style="left:895px;top:576px;width:372px"></div>
<div class="cb" style="left:844px;top:594px"></div>
<div class="t" style="left:869px;top:593px;">Record</div>
<div class="a" style="left:1025px;top:588px;width:28px;height:28px;border:1.6px solid #806028;border-radius:4px;background:linear-gradient(#ffc840,#ffa628 60%,#ffb040);font-size:18px;color:#2a1808;text-align:center;line-height:24px">1</div>
<div class="a" style="left:1059px;top:588px;width:28px;height:28px;border:1.4px solid #b4b4b4;border-radius:4px;background:linear-gradient(#fafafa,#dcdcdc);font-size:18px;color:#333;text-align:center;line-height:24.5px">2</div>
<div class="t" style="left:869px;top:629.6px;">Record Delay</div>
<div class="inp" style="left:1025px;top:621px">10</div>
<div class="t" style="left:1144px;top:627px;">s (10~300)</div>
<div class="cb" style="left:844px;top:666px"></div>
<div class="t" style="left:869px;top:666px;">Relay-out</div>
<div class="a" style="left:1025px;top:660px;width:28px;height:28px;border:1.6px solid #806028;border-radius:4px;background:linear-gradient(#ffc840,#ffa628 60%,#ffb040);font-size:18px;color:#2a1808;text-align:center;line-height:24px">1</div>
<div class="a" style="left:1059px;top:660px;width:28px;height:28px;border:1.4px solid #b4b4b4;border-radius:4px;background:linear-gradient(#fafafa,#dcdcdc);font-size:18px;color:#333;text-align:center;line-height:24.5px">2</div>
<div class="t" style="left:869px;top:701.8px;">Alarm Delay</div>
<div class="inp" style="left:1025px;top:694px">3</div>
<div class="t" style="left:1144px;top:699px;">s (2~300)</div>
<div class="cb" style="left:844px;top:738px"></div>
<div class="t" style="left:869px;top:738.8px;">Send Email</div>
<div class="cb" style="left:844px;top:774px"><svg style="position:absolute;left:-1.6px;top:-1.6px" width="17" height="17" viewBox="0 0 17 17"><path d="M2 8.4 L7.4 13 L14.4 3" fill="none" stroke="#111" stroke-width="3"/></svg></div>
<div class="t" style="left:869px;top:774.4px;">Audio Linkage</div>
<div class="t" style="left:869px;top:810px;">Play Count</div>
<div class="inp" style="left:1025px;top:804px">2</div>
<div class="t" style="left:1144px;top:808px;">(1~15)</div>
<div class="a" style="left:470px;top:750px;width:22px;height:18px;border:1px solid #8a8a8a;border-radius:3px;background:linear-gradient(#fafafa,#d0d0d0)"><div style="position:absolute;left:5px;top:7px;width:10px;height:1.2px;background:#555"></div></div><div class="a" style="left:492px;top:756px;width:155px;height:3.5px;background:#a6a6a6;border-radius:2px"></div><div class="a" style="left:631px;top:746px;width:13px;height:25px;border:1px solid #7a7a7a;border-radius:6px;background:linear-gradient(90deg,#e0e0e0,#fdfdfd 50%,#cfcfcf)"></div><div class="a" style="left:647px;top:750px;width:22px;height:18px;border:1px solid #8a8a8a;border-radius:3px;background:linear-gradient(#fafafa,#d0d0d0)"><div style="position:absolute;left:5px;top:7px;width:10px;height:1.2px;background:#555"></div><div style="position:absolute;left:9px;top:3px;width:1.2px;height:10px;background:#555"></div></div><div class="t" style="left:674px;top:749px;font-size:15.5px">100</div>
<div class="a" style="left:470px;top:786px;width:22px;height:18px;border:1px solid #8a8a8a;border-radius:3px;background:linear-gradient(#fafafa,#d0d0d0)"><div style="position:absolute;left:5px;top:7px;width:10px;height:1.2px;background:#555"></div></div><div class="a" style="left:492px;top:792px;width:155px;height:3.5px;background:#a6a6a6;border-radius:2px"></div><div class="a" style="left:631px;top:782px;width:13px;height:25px;border:1px solid #7a7a7a;border-radius:6px;background:linear-gradient(90deg,#e0e0e0,#fdfdfd 50%,#cfcfcf)"></div><div class="a" style="left:647px;top:786px;width:22px;height:18px;border:1px solid #8a8a8a;border-radius:3px;background:linear-gradient(#fafafa,#d0d0d0)"><div style="position:absolute;left:5px;top:7px;width:10px;height:1.2px;background:#555"></div><div style="position:absolute;left:9px;top:3px;width:1.2px;height:10px;background:#555"></div></div><div class="t" style="left:674px;top:785px;font-size:15.5px">100</div>
</body></html>
